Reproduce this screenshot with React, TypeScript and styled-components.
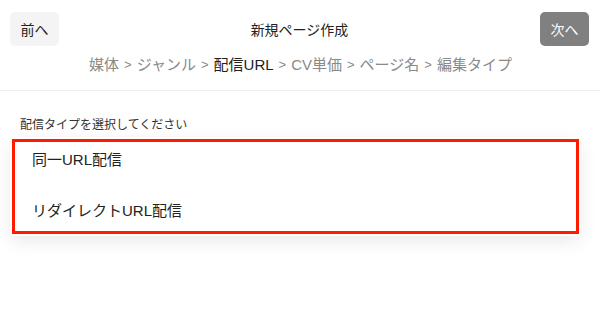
import React from "react";
import styled, { createGlobalStyle } from "styled-components";

const GlobalStyle = createGlobalStyle`
  html, body { margin: 0; padding: 0; background: #ffffff; }
  body {
    font-family: "Liberation Sans", "Noto Sans CJK JP", "Noto Sans", sans-serif;
    color: #222;
    width: 600px;
    height: 317px;
    overflow: hidden;
  }
`;

const Page = styled.div`
  display: flex;
  flex-direction: column;
  width: 600px;
`;

const Header = styled.header`
  display: flex;
  flex-direction: column;
  border-bottom: 1px solid #eeeeee;
  padding: 12px 11px 14px 10px;
  gap: 8px;
`;

const TopBar = styled.div`
  display: grid;
  grid-template-columns: 1fr auto 1fr;
  align-items: center;
  height: 34px;
`;

const NavButton = styled.button<{ $primary?: boolean }>`
  justify-self: ${(p) => (p.$primary ? "end" : "start")};
  border: none;
  border-radius: 5px;
  height: 34px;
  width: 49px;
  padding: 0;
  font-family: inherit;
  font-size: 14px;
  background: ${(p) => (p.$primary ? "#808080" : "#f4f4f4")};
  color: ${(p) => (p.$primary ? "#ffffff" : "#222222")};
`;

const Title = styled.h1`
  margin: 0;
  font-size: 14px;
  font-weight: 400;
  color: #222;
`;

const Crumbs = styled.nav`
  display: flex;
  justify-content: center;
  align-items: center;
  font-size: 15px;
  line-height: 22px;
  color: #8a8a8a;
  padding-left: 2px;
`;

const Crumb = styled.span<{ $active?: boolean }>`
  color: ${(p) => (p.$active ? "#222222" : "#8a8a8a")};
`;

const Sep = styled.span`
  display: inline-block;
  margin: 0 5px;
  font-size: 13px;
  color: #8a8a8a;
`;

const Body = styled.section`
  display: flex;
  flex-direction: column;
  padding: 26px 21px 0 12px;
`;

const Label = styled.div`
  font-size: 12px;
  line-height: 16px;
  color: #333;
  padding-left: 8px;
  margin-bottom: 6px;
`;

const OptionList = styled.ul`
  list-style: none;
  margin: 0;
  padding: 0;
  display: flex;
  flex-direction: column;
  gap: 13px;
  border: 3px solid #ff1a00;
  background: #fff;
  box-shadow: 0 0 0 2px #ffffff, 0 6px 18px rgba(0, 0, 0, 0.1);
`;

const Option = styled.li`
  font-size: 15px;
  line-height: 22px;
  padding: 7px 17px 9px;
  color: #222;
`;

const steps = [
  { label: "媒体" },
  { label: "ジャンル" },
  { label: "配信URL", active: true },
  { label: "CV単価" },
  { label: "ページ名" },
  { label: "編集タイプ" },
];

export default function App() {
  return (
    <>
      <GlobalStyle />
      <Page>
        <Header>
          <TopBar>
            <NavButton>前へ</NavButton>
            <Title>新規ページ作成</Title>
            <NavButton $primary>次へ</NavButton>
          </TopBar>
          <Crumbs>
            {steps.map((s, i) => (
              <React.Fragment key={s.label}>
                {i > 0 && <Sep>&gt;</Sep>}
                <Crumb $active={s.active}>{s.label}</Crumb>
              </React.Fragment>
            ))}
          </Crumbs>
        </Header>
        <Body>
          <Label>配信タイプを選択してください</Label>
          <OptionList>
            <Option>同一URL配信</Option>
            <Option>リダイレクトURL配信</Option>
          </OptionList>
        </Body>
      </Page>
    </>
  );
}
